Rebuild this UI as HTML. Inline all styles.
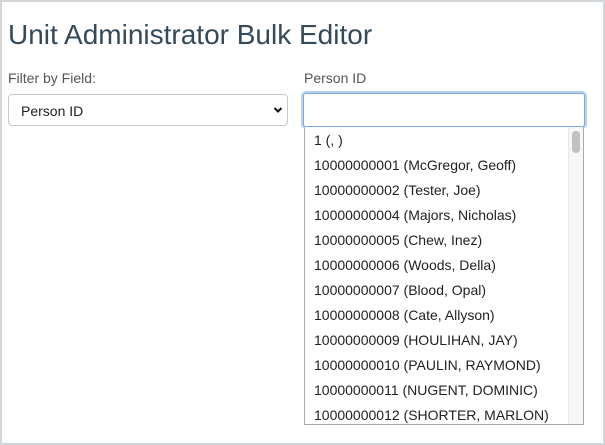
<!DOCTYPE html>
<html><head><style>
body{margin:0;width:605px;height:445px;overflow:hidden;background:#fff;font-family:"Liberation Sans",sans-serif;}
.frame{position:absolute;left:0;top:0;width:601px;height:441px;border:2px solid #d3d7da;}
h1{position:absolute;left:8px;top:19px;margin:0;font-size:28px;font-weight:normal;color:#34495a;}
.lbl{position:absolute;top:70px;font-size:14px;color:#555;}
.sel{position:absolute;left:8px;top:94px;width:278px;height:30px;border:1px solid #c8c8c8;border-radius:4px;font-size:14px;color:#222;box-sizing:content-box;}
.sel span{position:absolute;left:12px;top:8px;}
.sel svg{position:absolute;right:4px;top:11px;}
.inp{position:absolute;left:303px;top:93px;width:280px;height:32px;border:1px solid #7fa9d6;border-radius:3px;box-shadow:0 0 0 2px #b6d1ee;}
.list{position:absolute;left:304px;top:127px;width:278px;height:296px;border:1px solid #aaa;border-top:none;overflow:hidden;background:#fff;padding-top:1px;box-sizing:content-box;}
.row{height:25px;line-height:25px;padding-left:9px;font-size:14px;color:#222;white-space:nowrap;}
.track{position:absolute;right:0;top:0;width:14px;height:100%;background:#f7f7f7;border-left:1px solid #e8e8e8;}
.thumb{position:absolute;right:3px;top:4px;width:8px;height:22px;border-radius:4px;background:#c1c1c1;}
</style></head><body>
<div class="frame"></div>
<h1>Unit Administrator Bulk Editor</h1>
<div class="lbl" style="left:8px">Filter by Field:</div>
<div class="lbl" style="left:304px">Person ID</div>
<div class="sel"><span>Person ID</span><svg width="10" height="8" viewBox="0 0 10 8"><path d="M1.5 2 L5 5.5 L8.5 2" stroke="#111" stroke-width="2" fill="none"/></svg></div>
<div class="inp"></div>
<div class="list">
<div class="row">1 (, )</div>
<div class="row">10000000001 (McGregor, Geoff)</div>
<div class="row">10000000002 (Tester, Joe)</div>
<div class="row">10000000004 (Majors, Nicholas)</div>
<div class="row">10000000005 (Chew, Inez)</div>
<div class="row">10000000006 (Woods, Della)</div>
<div class="row">10000000007 (Blood, Opal)</div>
<div class="row">10000000008 (Cate, Allyson)</div>
<div class="row">10000000009 (HOULIHAN, JAY)</div>
<div class="row">10000000010 (PAULIN, RAYMOND)</div>
<div class="row">10000000011 (NUGENT, DOMINIC)</div>
<div class="row">10000000012 (SHORTER, MARLON)</div>
<div class="track"><div class="thumb"></div></div>
</div>
</body></html>
